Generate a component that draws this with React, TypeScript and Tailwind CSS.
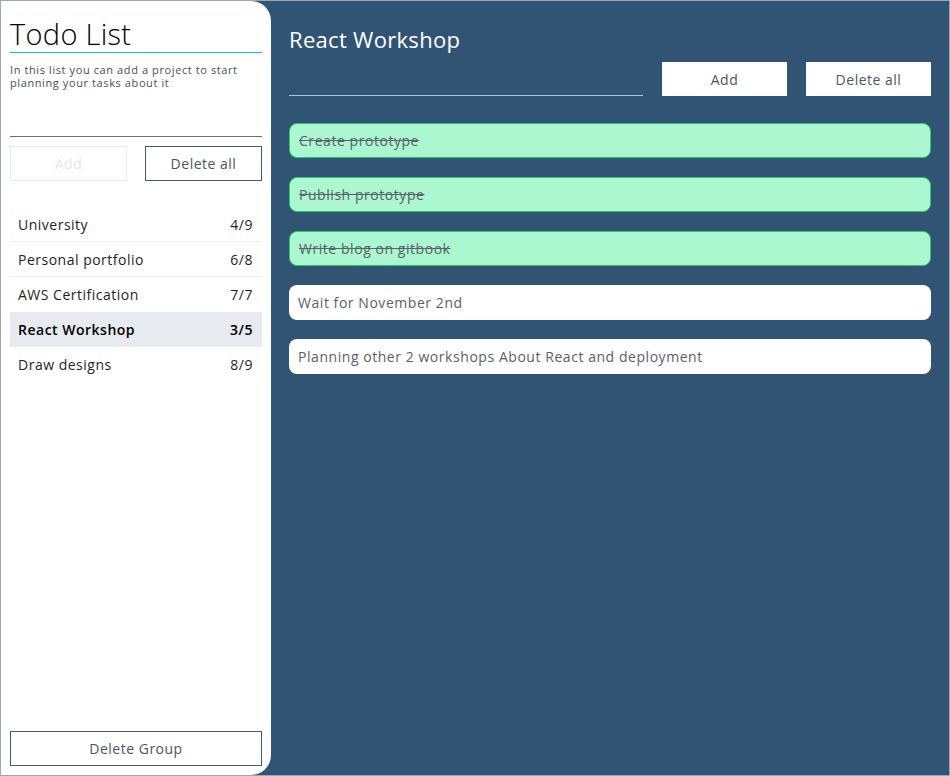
import { useState } from "react";

type Group = { name: string; done: number; total: number };
type Task = { text: string; done: boolean };

const groups: Group[] = [
  { name: "University", done: 4, total: 9 },
  { name: "Personal portfolio", done: 6, total: 8 },
  { name: "AWS Certification", done: 7, total: 7 },
  { name: "React Workshop", done: 3, total: 5 },
  { name: "Draw designs", done: 8, total: 9 },
];

const tasks: Task[] = [
  { text: "Create prototype", done: true },
  { text: "Publish prototype", done: true },
  { text: "Write blog on gitbook", done: true },
  { text: "Wait for November 2nd", done: false },
  { text: "Planning other 2 workshops About React and deployment", done: false },
];

const font = { fontFamily: "'Open Sans', 'Noto Sans', sans-serif" };

const Sidebar = ({ selected }: { selected: string }) => {
  const [groupName, setGroupName] = useState("");

  return (
    <aside className="w-[270px] shrink-0 bg-white rounded-r-[20px] flex flex-col px-[9px] pt-[15px] pb-[9px]">
      <div className="h-[37px] border-b border-[#12bcc8]">
        <h1 className="text-[29px] leading-[36px] font-light text-black tracking-[0.3px]">
          Todo List
        </h1>
      </div>
      <p className="mt-[10px] pr-[20px] text-[11px] leading-[13px] text-[#4a4f5a] tracking-[0.6px]">
        In this list you can add a project to start planning your tasks about it
      </p>

      <input
        value={groupName}
        onChange={(e) => setGroupName(e.target.value)}
        className="h-[48px] w-full border-b border-[#6b7078] outline-none text-[14px]"
      />

      <div className="mt-[9px] flex justify-between text-[14px] tracking-[0.5px]">
        <button disabled className="w-[117px] h-[35px] border border-[#e8ebef] text-[#e3e6ea]">
          Add
        </button>
        <button className="w-[117px] h-[35px] border border-[#4b5563] text-[#4b5563]">
          Delete all
        </button>
      </div>

      {/* groups */}
      <ul className="mt-[26px] text-[14px] tracking-[0.5px]">
        {groups.map((g, i) => (
          <li
            key={g.name}
            className={`h-[35px] flex items-center justify-between pl-[8px] pr-[9px] ${
              g.name === selected
                ? "bg-[#e7eaee] font-semibold text-black"
                : "text-[#1f2328]"
            } ${i < groups.length - 1 && g.name !== selected && groups[i + 1].name !== selected ? "border-b border-[#eceef1]" : ""}`}
          >
            <span>{g.name}</span>
            <span>
              {g.done}/{g.total}
            </span>
          </li>
        ))}
      </ul>

      <button className="mt-auto h-[35px] w-full border border-[#4b5563] text-[14px] tracking-[0.5px] text-[#4b5563]">
        Delete Group
      </button>
    </aside>
  );
};

export default function App() {
  const [taskText, setTaskText] = useState("");
  const selected = "React Workshop";

  return (
    <div
      style={font}
      className="h-screen w-full flex border border-[#9ca6b2] bg-[#315475] overflow-hidden"
    >
      <Sidebar selected={selected} />

      <main className="flex-1 pl-[18px] pr-[18px] pt-[24px]">
        <h2 className="h-[28px] text-[22px] leading-[28px] text-white tracking-[0.3px]">
          {selected}
        </h2>

        <div className="mt-[9px] flex items-end gap-[19px] text-[14px] tracking-[0.5px]">
          <input
            value={taskText}
            onChange={(e) => setTaskText(e.target.value)}
            className="flex-1 h-[34px] bg-transparent border-b border-[#b9c2cd] outline-none text-white"
          />
          <button className="w-[125px] h-[34px] bg-white text-[#4b5563]">Add</button>
          <button className="w-[125px] h-[34px] bg-white text-[#4b5563]">Delete all</button>
        </div>

        <div className="mt-[27px] flex flex-col gap-[19px] text-[14px] tracking-[0.55px]">
          {tasks.map((t) => (
            <div
              key={t.text}
              className={`h-[35px] rounded-[8px] px-[9px] flex items-center text-[#5a606b] ${
                t.done
                  ? "bg-[#abf7cf] border border-[#2fc76a] line-through"
                  : "bg-white"
              }`}
            >
              {t.text}
            </div>
          ))}
        </div>
      </main>
    </div>
  );
}
